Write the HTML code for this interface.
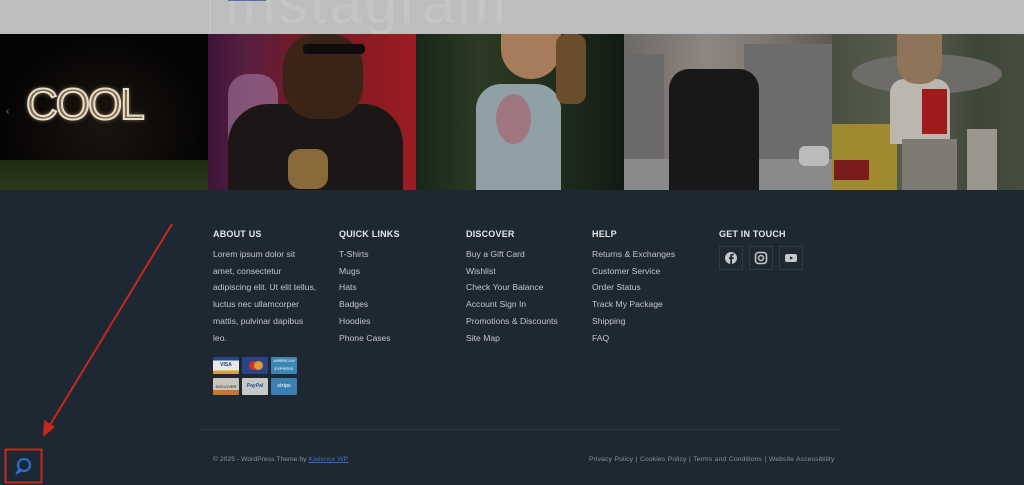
<!DOCTYPE html>
<html><head><meta charset="utf-8"><style>
*{margin:0;padding:0;box-sizing:border-box}
body{width:1024px;height:485px;overflow:hidden;background:#1e2833;font-family:"Liberation Sans",sans-serif;position:relative}
.top{position:absolute;left:0;top:0;width:1024px;height:34px;background:#bdbdbd;overflow:hidden}
.top .big{position:absolute;left:224px;top:-30px;font-size:58px;color:#c5c5c5;letter-spacing:3px;font-weight:normal}
.top .vl{position:absolute;left:209px;top:0;width:2px;height:34px;background:#c4c4c4}
.tile{position:absolute;top:34px;height:156px;width:208px;overflow:hidden}
.col{position:absolute;top:229px;color:#c3c6ca;font-size:8.6px}
.col h4{font-size:9px;color:#e4e6e8;font-weight:bold;letter-spacing:.2px;margin-bottom:7px}
.col p{line-height:16.7px}
.col .l{line-height:16.7px}
.soc{display:inline-block;width:24px;height:24px;border:1px solid #2e3a47;margin-right:6px;position:relative;vertical-align:top}
.card{position:absolute;width:26px;height:17px;border-radius:1px;font-size:5px;font-weight:bold;text-align:center;line-height:17px}
.bot{position:absolute;top:456px;font-size:6.8px;color:#8a9199}
</style></head><body>
<div class="top"><div class="vl"></div><div class="big">Instagram</div>
<div style="position:absolute;left:228px;top:-2px;width:38px;height:3px;background:#5670a6"></div></div>

<div class="tile" style="left:0;background:radial-gradient(ellipse at 50% 60%,#1a1410,#050404 70%)">
<div style="position:absolute;left:0;bottom:0;width:208px;height:30px;background:linear-gradient(#1f2a14,#2c3a1c)"></div>
<div style="position:absolute;left:26px;top:46px;font-size:44px;color:transparent;-webkit-text-stroke:2px #e9ddca;text-shadow:0 0 5px #c4a878;font-family:'Liberation Sans';letter-spacing:-2px">COOL</div>
<div style="position:absolute;left:6px;top:72px;color:#777;font-size:10px">‹</div></div>
<div class="tile" style="left:208px;background:linear-gradient(90deg,#3e1438 0%,#5a2040 20%,#7a1720 50%,#9b1d24 100%)">
<div style="position:absolute;left:20px;top:40px;width:50px;height:100px;background:#b28ab4;opacity:.5;border-radius:20px"></div>
<div style="position:absolute;left:20px;top:70px;width:175px;height:100px;background:#1c1616;border-radius:40px 40px 0 0"></div>
<div style="position:absolute;left:75px;top:0;width:80px;height:85px;background:#3a2418;border-radius:40%"></div>
<div style="position:absolute;left:95px;top:10px;width:62px;height:10px;background:#0e0c0c;border-radius:4px"></div>
<div style="position:absolute;left:80px;top:115px;width:40px;height:40px;background:#8a6a3a;border-radius:30%"></div></div>
<div class="tile" style="left:416px;background:linear-gradient(90deg,#16261a,#2c3a22 30%,#1e2c1c 70%,#101a12)">
<div style="position:absolute;left:60px;top:50px;width:85px;height:110px;background:#8fa1a6;border-radius:25px 25px 0 0"></div>
<div style="position:absolute;left:85px;top:0;width:60px;height:45px;background:#a77c5c;border-radius:0 0 30px 30px"></div>
<div style="position:absolute;left:140px;top:0;width:30px;height:70px;background:#6b4c2c;border-radius:10px"></div>
<div style="position:absolute;left:80px;top:60px;width:35px;height:50px;background:#a07780;border-radius:50%"></div></div>
<div class="tile" style="left:624px;background:linear-gradient(90deg,#6e6866,#8e8680 40%,#7a7672 70%,#5e5854)">
<div style="position:absolute;left:0;top:20px;width:40px;height:110px;background:#6a6a6a"></div>
<div style="position:absolute;left:120px;top:10px;width:90px;height:120px;background:#6c6c6c"></div>
<div style="position:absolute;left:0;top:125px;width:208px;height:31px;background:#8a8a8a"></div>
<div style="position:absolute;left:45px;top:35px;width:90px;height:121px;background:#1a1718;border-radius:20px 20px 0 0"></div>
<div style="position:absolute;left:175px;top:112px;width:30px;height:20px;background:#bbb;border-radius:6px"></div></div>
<div class="tile" style="left:832px;background:linear-gradient(90deg,#4a5040,#5a5e50 40%,#3e4638 70%,#4a4e40)">
<div style="position:absolute;left:20px;top:20px;width:150px;height:40px;background:#6e6c66;border-radius:50%"></div>
<div style="position:absolute;left:0;top:90px;width:65px;height:66px;background:#a08a30"></div>
<div style="position:absolute;left:2px;top:126px;width:35px;height:20px;background:#7a1c1c"></div>
<div style="position:absolute;left:58px;top:45px;width:60px;height:65px;background:#bcb6b0;border-radius:14px 14px 0 0"></div>
<div style="position:absolute;left:90px;top:55px;width:25px;height:45px;background:#a01c1c"></div>
<div style="position:absolute;left:70px;top:105px;width:55px;height:51px;background:#7e7a74"></div>
<div style="position:absolute;left:65px;top:0;width:45px;height:50px;background:#8e7458;border-radius:0 0 20px 20px"></div>
<div style="position:absolute;left:135px;top:95px;width:30px;height:61px;background:#9a968e"></div></div>

<div class="col" style="left:213px;width:130px"><h4>ABOUT US</h4><p>Lorem ipsum dolor sit<br>amet, consectetur<br>adipiscing elit. Ut elit tellus,<br>luctus nec ullamcorper<br>mattis, pulvinar dapibus<br>leo.</p></div>
<div class="col" style="left:339px"><h4>QUICK LINKS</h4><div class="l">T-Shirts<br>Mugs<br>Hats<br>Badges<br>Hoodies<br>Phone Cases</div></div>
<div class="col" style="left:466px"><h4>DISCOVER</h4><div class="l">Buy a Gift Card<br>Wishlist<br>Check Your Balance<br>Account Sign In<br>Promotions &amp; Discounts<br>Site Map</div></div>
<div class="col" style="left:592px"><h4>HELP</h4><div class="l">Returns &amp; Exchanges<br>Customer Service<br>Order Status<br>Track My Package<br>Shipping<br>FAQ</div></div>
<div class="col" style="left:719px"><h4>GET IN TOUCH</h4>
<span class="soc"><svg width="22" height="22" viewBox="0 0 22 22"><circle cx="11" cy="11" r="6" fill="#c3c6ca"/><path d="M12 17v-5h1.6l.3-1.8H12V9.2c0-.5.2-.8.8-.8h1v-1.6h-1.4c-1.5 0-2.2.8-2.2 2.2v1.2H9V12h1.2v5" fill="#1e2833"/></svg></span><span class="soc"><svg width="22" height="22" viewBox="0 0 22 22"><rect x="5.5" y="5.5" width="11" height="11" rx="3" fill="none" stroke="#c3c6ca" stroke-width="1.6"/><circle cx="11" cy="11" r="2.5" fill="none" stroke="#c3c6ca" stroke-width="1.5"/></svg></span><span class="soc"><svg width="22" height="22" viewBox="0 0 22 22"><rect x="5" y="7" width="12" height="8" rx="2" fill="#c3c6ca"/><path d="M10 9.2v3.6l3-1.8z" fill="#1e2833"/></svg></span></div>

<div class="card" style="left:213px;top:357px;background:linear-gradient(#1c4a8a 0 20%,#e8e8e8 20% 80%,#d9a03a 80%);color:#1a3a7a">VISA</div>
<div class="card" style="left:242px;top:357px;background:#2a4486"><span style="position:absolute;left:7px;top:4px;width:9px;height:9px;border-radius:50%;background:#d0302a"></span><span style="position:absolute;left:12px;top:4px;width:9px;height:9px;border-radius:50%;background:#e09a30"></span></div>
<div class="card" style="left:271px;top:357px;background:#3a86b4;color:#cde;font-size:4px;line-height:8px">AMERICAN EXPRESS</div>
<div class="card" style="left:213px;top:378px;background:linear-gradient(#cbc5bd 70%,#c8782a 70%);color:#555;font-size:4px">DISCOVER</div>
<div class="card" style="left:242px;top:378px;background:#c8c8c8;color:#20508a;font-style:italic">PayPal</div>
<div class="card" style="left:271px;top:378px;background:#3a7eb2;color:#dde">stripe</div>

<div style="position:absolute;left:200px;top:429px;width:642px;height:1px;background:#2c3641"></div>
<div class="bot" style="left:213px">© 2025 - WordPress Theme by <span style="color:#3a6fc0;text-decoration:underline">Kadence WP</span></div>
<div class="bot" style="left:589px;letter-spacing:.1px;word-spacing:.5px">Privacy Policy | Cookies Policy | Terms and Conditions | Website Accessibility</div>

<svg style="position:absolute;left:0;top:0" width="1024" height="485"><line x1="172" y1="224" x2="50" y2="425" stroke="#c8271c" stroke-width="2"/><path d="M43 437 L44 420 L55 427 Z" fill="#c8271c"/>
<rect x="5.5" y="449.5" width="36" height="33" fill="none" stroke="#c8271c" stroke-width="2"/>
<circle cx="24" cy="465" r="6" fill="none" stroke="#2a6fd0" stroke-width="2.2"/><path d="M19 469 L16 474 L21 471" fill="#2a6fd0" stroke="#2a6fd0" stroke-width="1.5"/></svg>
</body></html>
